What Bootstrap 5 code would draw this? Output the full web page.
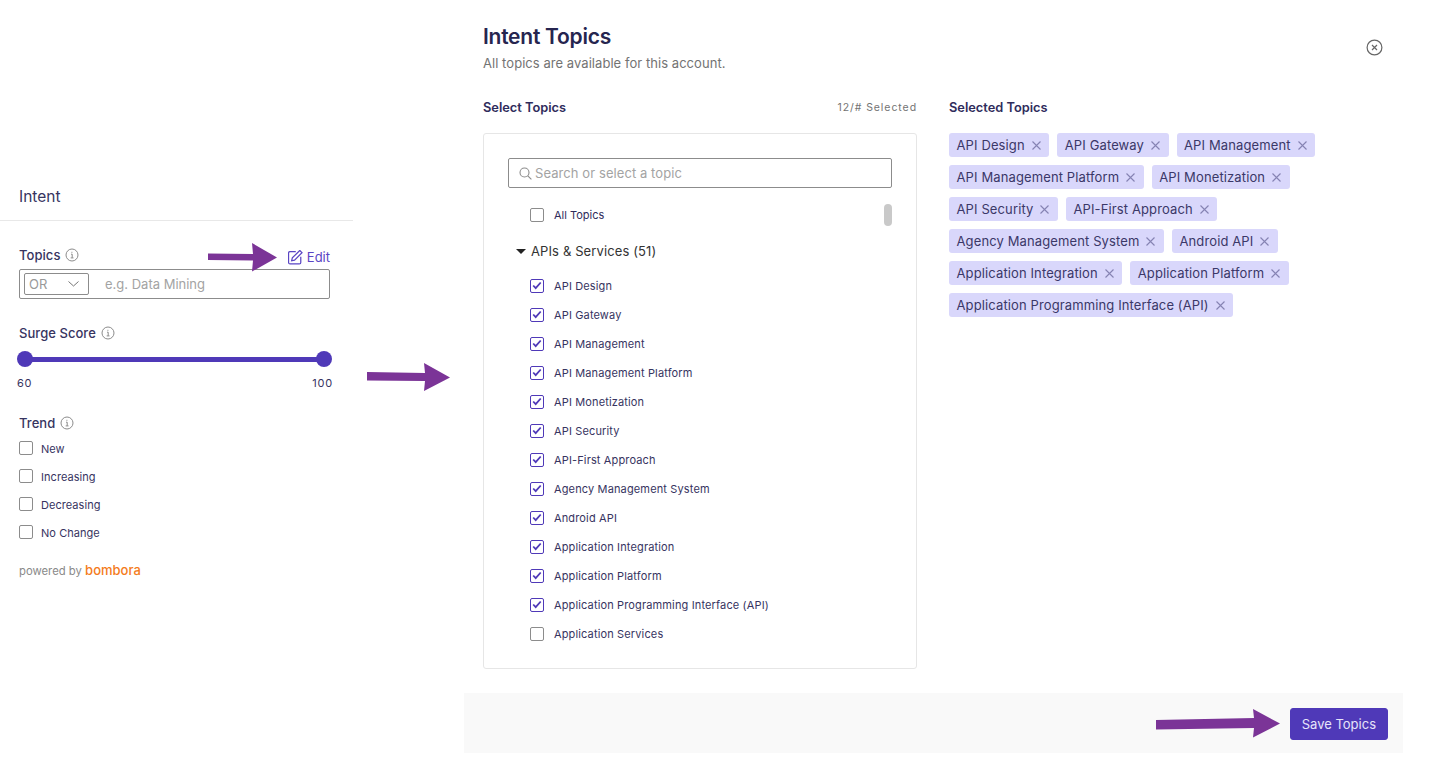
<!DOCTYPE html>
<html lang="en">
<head>
<meta charset="utf-8">
<title>Intent Topics</title>
<link href="https://cdn.jsdelivr.net/npm/bootstrap@5.3.0/dist/css/bootstrap.min.css" rel="stylesheet">
<style>
html,body{height:767px;overflow:hidden;background:#fff}
body{font-family:Inter,"Liberation Sans",sans-serif;color:#2f2c5c;position:relative;font-size:13px}
.left-pane{width:353px;padding-top:185px;flex:none}
.left-head{font-size:15.5px;line-height:23px;padding:0 0 12px 19px;border-bottom:1px solid #e8e8e8;color:#37345f}
.left-body{padding:24px 23px 0 19px}
.lbl{font-size:13px;line-height:20px;color:#37345f;font-weight:500;letter-spacing:.05px}
.info{width:14px;height:14px;margin-left:5px;flex:none}
.edit-link{color:#5a45c4;font-size:13px;line-height:20px;text-decoration:none;margin-top:2px;margin-bottom:-2px}
.topic-field{height:30px;border:1px solid #8c8c8c;border-radius:2px;padding:3px 4px;margin-top:4px}
.or-box{width:65px;height:22px;border:1px solid #8c8c8c;border-radius:2px;padding:0 4px;color:#999;font-size:13px;line-height:20px}
.ph{color:#a3a3a3;font-size:13px;margin-left:16px;padding-top:1px}
.range-wrap{height:16px;margin:8px -2px 0 -2px;position:relative}
.range-line{position:absolute;left:6px;right:6px;top:6px;height:4.5px;background:#4f39b8}
.range-dot{position:absolute;top:0;width:16px;height:16px;border-radius:50%;background:#4f39b8}
.range-nums{font-size:11px;letter-spacing:.8px;color:#37345f;margin:8px -3px 0 -2px;line-height:16px}
.cbx{width:14px;height:14px;border:1px solid #8c8c8c;border-radius:2px;flex:none;background:#fff;display:inline-flex;align-items:center;justify-content:center;margin-top:-2px}
.cbx-on{border-color:#4f39b8}
.trend-row{height:28px;font-size:11px;color:#37345f;letter-spacing:.05px}
.trend-row .cbx{margin-right:8px}
.powered{font-size:11.3px;color:#8a8a8a;margin-top:14px}
.bomb{color:#f47b20;font-weight:500;font-size:13px}
.dlg{width:939px;flex:none;margin-left:111px;height:753px;display:flex;flex-direction:column}
.dlg-main{flex:1;padding:23px 19px 0 19px;position:relative;min-height:0}
.dlg-title{font-size:21px;line-height:28px;font-weight:600;color:#26254f;letter-spacing:-.25px}
.dlg-sub{font-size:13px;line-height:18px;color:#737373;margin-top:3px;letter-spacing:.05px}
.close-ic{position:absolute;left:902px;top:39px;width:17px;height:17px}
.cols{margin-top:26px;gap:32px}
.col-left{width:434px;flex:none}
.sec-title{font-size:12.8px;font-weight:600;line-height:20px;color:#2f2c5c}
.count{font-size:10.5px;letter-spacing:.93px;color:#737373}
.pick-box{height:536px;border:1px solid #e6e6e6;border-radius:3px;margin-top:15px;padding:24px 24px 0 24px;position:relative}
.search-f{height:30px;border:1px solid #8c8c8c;border-radius:2px;padding:1px 10px 0;font-size:13px;color:#a3a3a3;letter-spacing:.08px}
.search-f svg{margin-right:3px}
.all-row{height:29px;margin-top:13px;padding-left:22px;font-size:11px}
.opt-row{height:29px;padding-left:22px;font-size:11px;color:#37345f;letter-spacing:.14px}
.opt-row .cbx,.all-row .cbx{margin-right:10px}
.grp{font-size:13px;line-height:20px;color:#333;margin:11px 0 11px 8px;padding:0;letter-spacing:.12px}
.tri{width:0;height:0;border-left:5px solid transparent;border-right:5px solid transparent;border-top:5px solid #222;margin-right:5px}
.thumb{position:absolute;right:24px;top:70px;width:8px;height:22px;border-radius:4px;background:#c9c9c9}
.chips{gap:8px;margin-top:15px;width:400px}
.chip{height:24px;background:#d9d7fb;border-radius:3px;padding:0 7.5px;font-size:13px;line-height:24px;color:#3b3868;display:inline-flex;align-items:center;letter-spacing:.12px}
.chip svg{margin-left:6px}
.dlg-foot{height:60px;background:#f9f9f9;padding-right:15px;flex:none}
.save-btn{--bs-btn-bg:#4f39b8;--bs-btn-border-color:#4f39b8;--bs-btn-color:#e6e4fa;--bs-btn-hover-bg:#4f39b8;--bs-btn-hover-border-color:#4f39b8;--bs-btn-hover-color:#fff;--bs-btn-font-size:13px;--bs-btn-border-radius:3px;--bs-btn-padding-x:11px;height:32px;padding-top:0;padding-bottom:0;line-height:30px;margin-top:2px}
.arrow{position:absolute}
</style>
</head>
<body>
<div class="d-flex">
  <div class="left-pane">
    <div class="left-head">Intent</div>
    <div class="left-body">
      <div class="d-flex align-items-start justify-content-between">
        <div class="d-flex align-items-center lbl">Topics
          <svg class="info" viewBox="0 0 14 14" fill="none" stroke="#8c8c8c"><circle cx="7" cy="7" r="6"/><path d="M6 6.200h1.200v3.600M5.700 9.900h2.800M6.900 3.800v1"/></svg>
        </div>
        <a class="edit-link d-flex align-items-center" href="#">
          <svg width="15" height="15" viewBox="1 1 13.500 13.500" fill="none" stroke="#5a45c4" stroke-width="1.100" class="me-1"><path d="M8 2.500H2.800a1.300 1.300 0 0 0-1.300 1.300v8.400a1.300 1.300 0 0 0 1.300 1.300h8.400a1.300 1.300 0 0 0 1.300-1.300V7"/><path d="M11.600 1.400l2 2-6.700 6.700-2.600.6.600-2.600z"/></svg>Edit</a>
      </div>
      <div class="topic-field d-flex align-items-center">
        <div class="or-box d-flex align-items-center justify-content-between">OR
          <svg class="me-1" width="13" height="8" viewBox="0 0 13 8" fill="none" stroke="#777" stroke-width="1"><path d="M1.500 1.500l5 4.500 5-4.500"/></svg>
        </div>
        <span class="ph">e.g. Data Mining</span>
      </div>
      <div class="d-flex align-items-center lbl" style="margin-top:24px">Surge Score
        <svg class="info" viewBox="0 0 14 14" fill="none" stroke="#8c8c8c"><circle cx="7" cy="7" r="6"/><path d="M6 6.200h1.200v3.600M5.700 9.900h2.800M6.900 3.800v1"/></svg>
      </div>
      <div class="range-wrap">
        <div class="range-line"></div>
        <div class="range-dot" style="left:0"></div>
        <div class="range-dot" style="right:0"></div>
      </div>
      <div class="range-nums d-flex justify-content-between"><span>60</span><span>100</span></div>
      <div class="d-flex align-items-center lbl" style="margin-top:22px;margin-bottom:2px">Trend
        <svg class="info" viewBox="0 0 14 14" fill="none" stroke="#8c8c8c"><circle cx="7" cy="7" r="6"/><path d="M6 6.200h1.200v3.600M5.700 9.900h2.800M6.900 3.800v1"/></svg>
      </div>
      <div class="trend-row d-flex align-items-center"><span class="cbx"></span>New</div>
      <div class="trend-row d-flex align-items-center"><span class="cbx"></span>Increasing</div>
      <div class="trend-row d-flex align-items-center"><span class="cbx"></span>Decreasing</div>
      <div class="trend-row d-flex align-items-center"><span class="cbx"></span>No Change</div>
      <div class="powered">powered by <span class="bomb">bombora</span></div>
    </div>
  </div>
  <div class="dlg">
    <div class="dlg-main">
      <div class="dlg-title">Intent Topics</div>
      <div class="dlg-sub">All topics are available for this account.</div>
      <svg class="close-ic" viewBox="0 0 17 17" fill="none" stroke="#666" stroke-width="1.200"><circle cx="8.500" cy="8.500" r="7.400"/><path d="M6 6l5 5M11 6l-5 5"/></svg>
      <div class="cols d-flex">
        <div class="col-left">
          <div class="d-flex justify-content-between align-items-center">
            <span class="sec-title">Select Topics</span><span class="count">12/# Selected</span>
          </div>
          <div class="pick-box">
            <div class="search-f d-flex align-items-center">
              <svg width="13" height="13" viewBox="0 0 13 13" fill="none" stroke="#8c8c8c" stroke-width="1.100"><circle cx="5.500" cy="5.500" r="4.500"/><path d="M8.800 8.800l3.600 3.600"/></svg>Search or select a topic
            </div>
            <div class="all-row d-flex align-items-center"><span class="cbx"></span>All Topics</div>
            <div class="grp d-flex align-items-center"><span class="tri"></span>APIs &amp; Services (51)</div>
            <div class="opt-row d-flex align-items-center"><span class="cbx cbx-on"><svg width="10" height="9" viewBox="0 0 10 9" fill="none" stroke="#4f39b8" stroke-width="1.800"><path d="M1.200 4.500l2.500 2.600 5-5.600"/></svg></span>API Design</div>
            <div class="opt-row d-flex align-items-center"><span class="cbx cbx-on"><svg width="10" height="9" viewBox="0 0 10 9" fill="none" stroke="#4f39b8" stroke-width="1.800"><path d="M1.200 4.500l2.500 2.600 5-5.600"/></svg></span>API Gateway</div>
            <div class="opt-row d-flex align-items-center"><span class="cbx cbx-on"><svg width="10" height="9" viewBox="0 0 10 9" fill="none" stroke="#4f39b8" stroke-width="1.800"><path d="M1.200 4.500l2.500 2.600 5-5.600"/></svg></span>API Management</div>
            <div class="opt-row d-flex align-items-center"><span class="cbx cbx-on"><svg width="10" height="9" viewBox="0 0 10 9" fill="none" stroke="#4f39b8" stroke-width="1.800"><path d="M1.200 4.500l2.500 2.600 5-5.600"/></svg></span>API Management Platform</div>
            <div class="opt-row d-flex align-items-center"><span class="cbx cbx-on"><svg width="10" height="9" viewBox="0 0 10 9" fill="none" stroke="#4f39b8" stroke-width="1.800"><path d="M1.200 4.500l2.500 2.600 5-5.600"/></svg></span>API Monetization</div>
            <div class="opt-row d-flex align-items-center"><span class="cbx cbx-on"><svg width="10" height="9" viewBox="0 0 10 9" fill="none" stroke="#4f39b8" stroke-width="1.800"><path d="M1.200 4.500l2.500 2.600 5-5.600"/></svg></span>API Security</div>
            <div class="opt-row d-flex align-items-center"><span class="cbx cbx-on"><svg width="10" height="9" viewBox="0 0 10 9" fill="none" stroke="#4f39b8" stroke-width="1.800"><path d="M1.200 4.500l2.500 2.600 5-5.600"/></svg></span>API-First Approach</div>
            <div class="opt-row d-flex align-items-center"><span class="cbx cbx-on"><svg width="10" height="9" viewBox="0 0 10 9" fill="none" stroke="#4f39b8" stroke-width="1.800"><path d="M1.200 4.500l2.500 2.600 5-5.600"/></svg></span>Agency Management System</div>
            <div class="opt-row d-flex align-items-center"><span class="cbx cbx-on"><svg width="10" height="9" viewBox="0 0 10 9" fill="none" stroke="#4f39b8" stroke-width="1.800"><path d="M1.200 4.500l2.500 2.600 5-5.600"/></svg></span>Android API</div>
            <div class="opt-row d-flex align-items-center"><span class="cbx cbx-on"><svg width="10" height="9" viewBox="0 0 10 9" fill="none" stroke="#4f39b8" stroke-width="1.800"><path d="M1.200 4.500l2.500 2.600 5-5.600"/></svg></span>Application Integration</div>
            <div class="opt-row d-flex align-items-center"><span class="cbx cbx-on"><svg width="10" height="9" viewBox="0 0 10 9" fill="none" stroke="#4f39b8" stroke-width="1.800"><path d="M1.200 4.500l2.500 2.600 5-5.600"/></svg></span>Application Platform</div>
            <div class="opt-row d-flex align-items-center"><span class="cbx cbx-on"><svg width="10" height="9" viewBox="0 0 10 9" fill="none" stroke="#4f39b8" stroke-width="1.800"><path d="M1.200 4.500l2.500 2.600 5-5.600"/></svg></span>Application Programming Interface (API)</div>
            <div class="opt-row d-flex align-items-center"><span class="cbx"></span>Application Services</div>
            <div class="thumb"></div>
          </div>
        </div>
        <div class="flex-grow-1">
          <div class="sec-title">Selected Topics</div>
          <div class="chips d-flex flex-wrap">
            <span class="chip">API Design<svg width="11" height="11" viewBox="0 0 11 11" fill="none" stroke="#8683b3" stroke-width="1.100"><path d="M1.500 1.500l8 8M9.500 1.500l-8 8"/></svg></span>
            <span class="chip">API Gateway<svg width="11" height="11" viewBox="0 0 11 11" fill="none" stroke="#8683b3" stroke-width="1.100"><path d="M1.500 1.500l8 8M9.500 1.500l-8 8"/></svg></span>
            <span class="chip">API Management<svg width="11" height="11" viewBox="0 0 11 11" fill="none" stroke="#8683b3" stroke-width="1.100"><path d="M1.500 1.500l8 8M9.500 1.500l-8 8"/></svg></span>
            <span class="chip">API Management Platform<svg width="11" height="11" viewBox="0 0 11 11" fill="none" stroke="#8683b3" stroke-width="1.100"><path d="M1.500 1.500l8 8M9.500 1.500l-8 8"/></svg></span>
            <span class="chip">API Monetization<svg width="11" height="11" viewBox="0 0 11 11" fill="none" stroke="#8683b3" stroke-width="1.100"><path d="M1.500 1.500l8 8M9.500 1.500l-8 8"/></svg></span>
            <span class="chip">API Security<svg width="11" height="11" viewBox="0 0 11 11" fill="none" stroke="#8683b3" stroke-width="1.100"><path d="M1.500 1.500l8 8M9.500 1.500l-8 8"/></svg></span>
            <span class="chip">API-First Approach<svg width="11" height="11" viewBox="0 0 11 11" fill="none" stroke="#8683b3" stroke-width="1.100"><path d="M1.500 1.500l8 8M9.500 1.500l-8 8"/></svg></span>
            <span class="chip">Agency Management System<svg width="11" height="11" viewBox="0 0 11 11" fill="none" stroke="#8683b3" stroke-width="1.100"><path d="M1.500 1.500l8 8M9.500 1.500l-8 8"/></svg></span>
            <span class="chip">Android API<svg width="11" height="11" viewBox="0 0 11 11" fill="none" stroke="#8683b3" stroke-width="1.100"><path d="M1.500 1.500l8 8M9.500 1.500l-8 8"/></svg></span>
            <span class="chip">Application Integration<svg width="11" height="11" viewBox="0 0 11 11" fill="none" stroke="#8683b3" stroke-width="1.100"><path d="M1.500 1.500l8 8M9.500 1.500l-8 8"/></svg></span>
            <span class="chip">Application Platform<svg width="11" height="11" viewBox="0 0 11 11" fill="none" stroke="#8683b3" stroke-width="1.100"><path d="M1.500 1.500l8 8M9.500 1.500l-8 8"/></svg></span>
            <span class="chip">Application Programming Interface (API)<svg width="11" height="11" viewBox="0 0 11 11" fill="none" stroke="#8683b3" stroke-width="1.100"><path d="M1.500 1.500l8 8M9.500 1.500l-8 8"/></svg></span>
          </div>
        </div>
      </div>
    </div>
    <div class="dlg-foot d-flex align-items-center justify-content-end">
      <button type="button" class="btn save-btn">Save Topics</button>
    </div>
  </div>
</div>
<svg class="arrow" style="left:208px;top:243px" width="70" height="29" viewBox="0 0 70 29"><path d="M0 10.500l45 .5-1-11L69 14.500 44 28.500l1-11-45-.5z" fill="#7b3497"/></svg>
<svg class="arrow" style="left:367px;top:363px" width="84" height="29" viewBox="0 0 84 29"><path d="M0 9l58 1-1-10 26 14.500L57 28l1-10-58-.5z" fill="#7b3497"/></svg>
<svg class="arrow" style="left:1156px;top:709px" width="125" height="29" viewBox="0 0 125 29"><path d="M0 11l98-2-1-9 27 14.500-27 14 1-9.500-98 1.500z" fill="#7b3497"/></svg>
<script src="https://cdn.jsdelivr.net/npm/bootstrap@5.3.0/dist/js/bootstrap.bundle.min.js"></script>
</body>
</html>
